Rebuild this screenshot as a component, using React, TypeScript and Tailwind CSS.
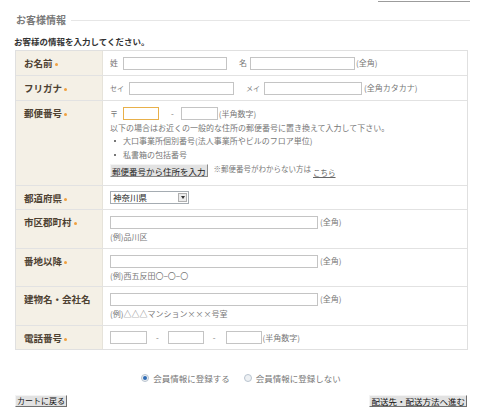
import React from "react";

const Req = () => (
  <span className="inline-block w-[3px] h-[3px] rounded-full bg-[#f0a040] ml-[2px] align-middle" />
);

const Field = ({ w, focus }: { w: number; focus?: boolean }) => (
  <span
    className={
      "inline-block h-[13px] bg-white border " +
      (focus ? "border-[#e8b04a]" : "border-[#c4c4c4]")
    }
    style={{ width: w }}
  />
);

interface RowProps {
  label: string;
  req?: boolean;
  h: number;
  children: React.ReactNode;
  last?: boolean;
}

const Row = ({ label, req = true, h, children, last }: RowProps) => (
  <div
    className={"flex " + (last ? "" : "border-b border-[#e2e2e2]")}
    style={{ height: h }}
  >
    <div className="w-[87px] shrink-0 bg-[#f4f0e6] border-r border-[#e6e3da] pl-[8px] pt-[6px] leading-[12px] text-[9.5px] font-bold text-[#4d4132]">
      {label}
      {req && <Req />}
    </div>
    <div className="flex-1 min-w-0 pl-[7px] text-[8px] text-[#777]">{children}</div>
  </div>
);

const Radio = ({ on }: { on?: boolean }) => (
  <span className="inline-flex items-center justify-center w-[8px] h-[8px] rounded-full border border-[#b9c4cf] bg-[#eef1f4]">
    {on && <span className="w-[4px] h-[4px] rounded-full bg-[#2f6cb5]" />}
  </span>
);

const Note = ({ text }: { text: string }) => (
  <div className="pt-[6px]">
    <div className="flex items-start">
      <Field w={208} />
      <span className="ml-[2px] leading-[11px]">(全角)</span>
    </div>
    <div className="mt-[2px] leading-[12px]">{text}</div>
  </div>
);

export default function App() {
  return (
    <div className="w-[480px] h-[417px] bg-white overflow-hidden font-['Noto_Sans_CJK_JP','Noto_Sans',sans-serif]">
      <div className="ml-[378px] w-[92px] h-[2px] border-b border-[#9c9c9c]" />

      <div className="flex items-center pl-[16px] pr-[10px] mt-[12px] h-[12px]">
        <span className="text-[10px] font-bold text-[#7a7a7a] leading-[12px]">お客様情報</span>
        <div className="flex-1 h-px bg-[#e6e6e6] ml-[5px]" />
      </div>

      <div className="pl-[14px] mt-[9px] text-[8.5px] font-bold text-[#333] leading-[12px]">
        お客様の情報を入力してください。
      </div>

      <div className="ml-[15px] w-[453px] mt-[3px] border border-[#e0e0e0]">
        <Row label="お名前" h={25}>
          <div className="flex items-center h-full">
            <span>姓</span>
            <span className="ml-[5px] flex"><Field w={104} /></span>
            <span className="ml-[12px]">名</span>
            <span className="ml-[3px] flex"><Field w={105} /></span>
            <span className="ml-[1px]">(全角)</span>
          </div>
        </Row>
        <Row label="フリガナ" h={25}>
          <div className="flex items-center h-full">
            <span className="text-[7px]">セイ</span>
            <span className="ml-[5px] flex"><Field w={105} /></span>
            <span className="ml-[12px] text-[7px]">メイ</span>
            <span className="ml-[4px] flex"><Field w={98} /></span>
            <span className="ml-[2px]">(全角カタカナ)</span>
          </div>
        </Row>
        <Row label="郵便番号" h={85}>
          <div className="pt-[5px] leading-[13px]">
            <div className="flex items-center h-[14px]">
              <span>〒</span>
              <span className="ml-[5px] flex"><Field w={36} focus /></span>
              <span className="ml-[12px]">-</span>
              <span className="ml-[7px] flex"><Field w={37} /></span>
              <span className="ml-[1px]">(半角数字)</span>
            </div>
            <div className="mt-[1px]">以下の場合はお近くの一般的な住所の郵便番号に置き換えて入力して下さい。</div>
            <div className="flex items-center">
              <span className="w-[2px] h-[2px] bg-[#777] ml-[4px] mr-[7px]" />
              大口事業所個別番号(法人事業所やビルのフロア単位)
            </div>
            <div className="flex items-center mt-[1px]">
              <span className="w-[2px] h-[2px] bg-[#777] ml-[4px] mr-[7px]" />
              私書箱の包括番号
            </div>
            <div className="flex items-start mt-[3px]">
              <span className="h-[13px] px-[1px] bg-[#e2e2e2] border-r border-b border-[#8a8a8a] border-l border-t border-l-[#f4f4f4] border-t-[#f4f4f4] text-[8.5px] leading-[12px] text-[#222]">
                郵便番号から住所を入力
              </span>
              <span className="ml-[6px] leading-[10px] text-[7.5px]">※郵便番号がわからない方は</span>
              <span className="ml-[2px] mt-[4px] leading-[10px] text-[7.5px] underline text-[#666]">こちら</span>
            </div>
          </div>
        </Row>
        <Row label="都道府県" h={24}>
          <div className="flex items-center h-full">
            <div className="w-[79px] h-[13px] border border-[#a5acb2] bg-white flex items-center justify-between">
              <span className="pl-[2px] text-[8.5px] text-[#222] leading-[11px]">神奈川県</span>
              <span className="w-[9px] h-[9px] mr-[1px] bg-[#ececec] border border-[#b0b0b0] flex items-center justify-center">
                <span className="w-0 h-0 border-l-[2.5px] border-r-[2.5px] border-t-[3px] border-l-transparent border-r-transparent border-t-[#333]" />
              </span>
            </div>
          </div>
        </Row>
        <Row label="市区郡町村" h={39}>
          <Note text="(例)品川区" />
        </Row>
        <Row label="番地以降" h={38}>
          <Note text="(例)西五反田〇−〇−〇" />
        </Row>
        <Row label="建物名・会社名" req={false} h={39}>
          <Note text="(例)△△△マンション×××号室" />
        </Row>
        <Row label="電話番号" h={23} last>
          <div className="flex items-center h-full">
            <Field w={37} />
            <span className="ml-[9px]">-</span>
            <span className="ml-[9px] flex"><Field w={36} /></span>
            <span className="ml-[9px]">-</span>
            <span className="ml-[10px] flex"><Field w={36} /></span>
            <span className="ml-[1px]">(半角数字)</span>
          </div>
        </Row>
      </div>

      <div className="flex justify-center items-center mt-[22px] h-[12px] text-[8.5px] text-[#777] pl-[2px]">
        <Radio on />
        <span className="ml-[4px]">会員情報に登録する</span>
        <span className="ml-[14px] flex"><Radio /></span>
        <span className="ml-[4px]">会員情報に登録しない</span>
      </div>

      <div className="flex justify-between pl-[15px] pr-[13px] mt-[11px]">
        <span className="h-[12px] px-[1px] bg-[#e2e2e2] border border-l-[#f4f4f4] border-t-[#f4f4f4] border-r-[#707070] border-b-[#707070] text-[8px] leading-[10px] text-[#111]">
          カートに戻る
        </span>
        <span className="h-[12px] px-[1px] bg-[#e2e2e2] border border-l-[#f4f4f4] border-t-[#f4f4f4] border-r-[#707070] border-b-[#707070] text-[8.5px] leading-[10px] text-[#111]">
          配送先・配送方法へ進む
        </span>
      </div>
    </div>
  );
}
